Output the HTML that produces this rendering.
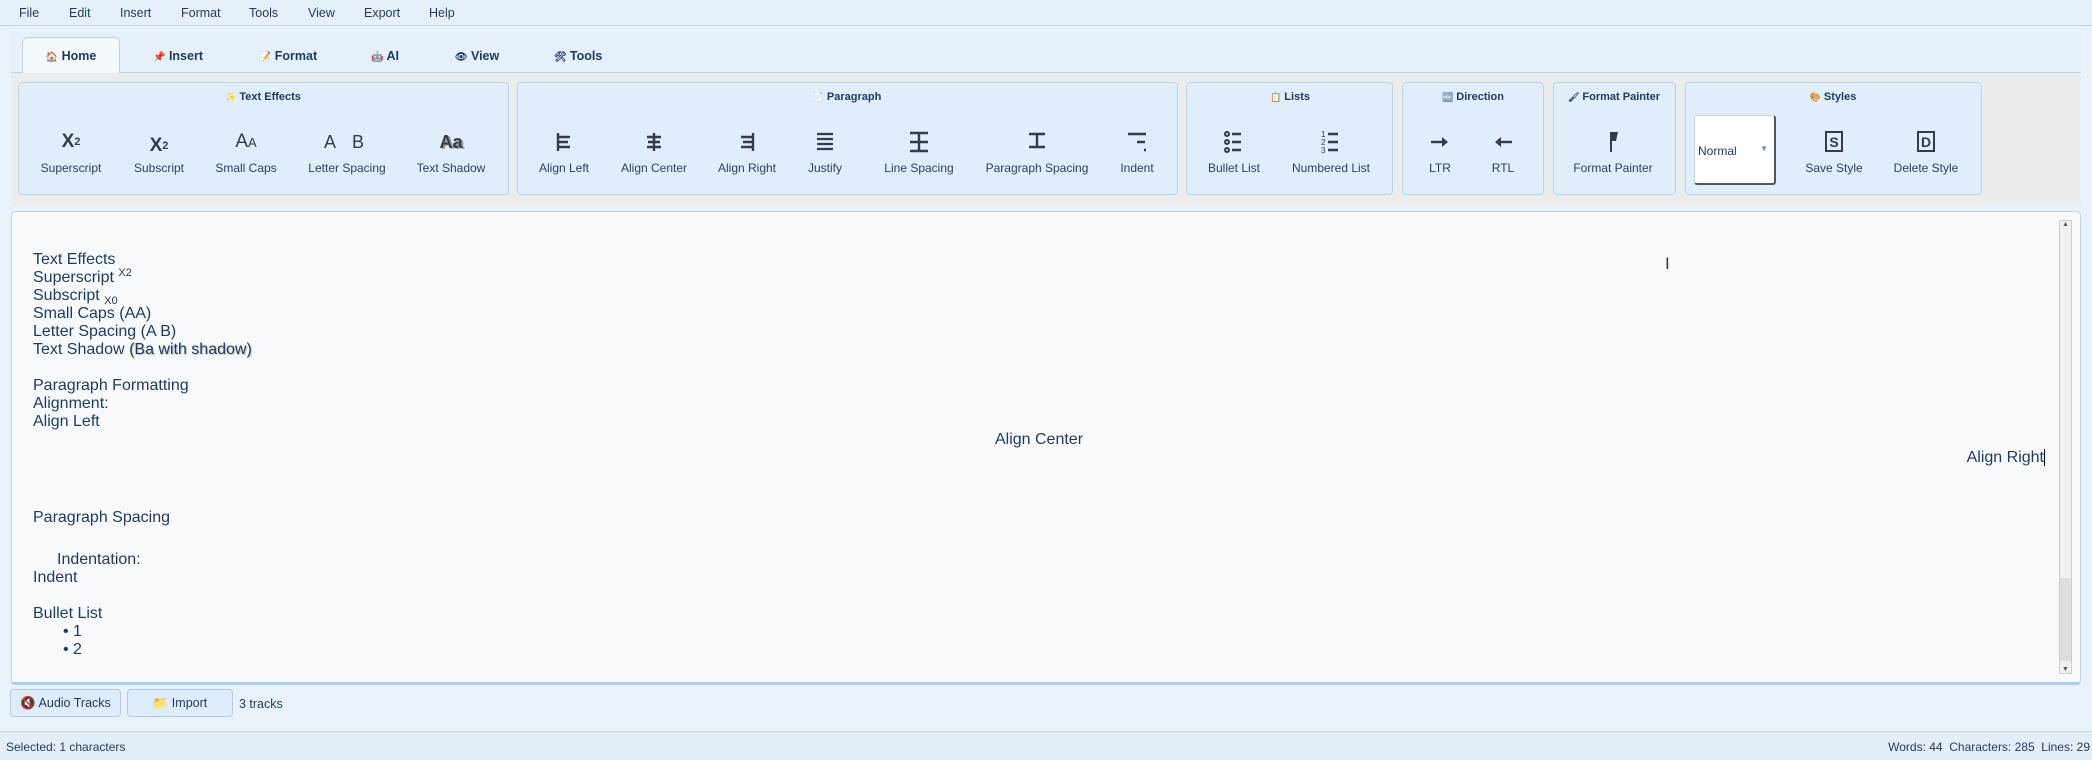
<!DOCTYPE html>
<html><head><meta charset="utf-8"><style>
*{margin:0;padding:0;box-sizing:border-box}
body{width:2092px;height:760px;overflow:hidden;background:#e9f2fb;font-family:"Liberation Sans","Noto Sans CJK SC",sans-serif;color:#1e3a5f;position:relative}
.a{position:absolute;white-space:nowrap}
.menu{top:0;left:0;width:2092px;height:26px;border-bottom:1px solid #bcd6ee;background:#e6f0fa}
.menu span{position:absolute;top:6px;font-size:12.5px;color:#1e3a5f}
.tabs{top:27px;left:11px;width:2070px;height:46px;background:#e5f0fb;border-bottom:1px solid #b9d4ee}
.tab{position:absolute;top:22px;font-size:12.5px;font-weight:bold;color:#1e3a5f;transform:translateX(-50%)}
.tab i{font-style:normal;font-size:10px}
.tb{top:73px;left:11px;width:2070px;height:133px;background:#ececec}
.g{position:absolute;top:82px;height:113px;background:#e0edfa;border:1px solid #b6d3ee;border-radius:4px}
.gt{position:absolute;top:91px;font-size:11px;font-weight:bold;color:#1e3a5f;transform:translateX(-50%)}
.gt i{font-style:normal;font-size:9px}
.lb{position:absolute;top:161px;font-size:12px;color:#2a4463;transform:translateX(-50%)}
.ic{position:absolute;top:129px;width:30px;height:26px;transform:translateX(-50%);display:flex;align-items:center;justify-content:center;color:#333c48}
.ed{top:211px;left:11px;width:2070px;height:474px;background:#f8f9fb;border:1px solid #b8d4ee;border-bottom:3px solid #a9cdef;border-radius:4px}
.t{position:absolute;font-size:16px;line-height:18px;color:#1e3a5f;white-space:nowrap}
.btn{position:absolute;top:689px;height:28px;background:#dfecf9;border:1px solid #aecbe8;border-radius:4px;font-size:12.5px;display:flex;align-items:center;justify-content:center;color:#1e3a5f}
.st{top:731px;left:0;width:2092px;height:29px;border-top:1px solid #b9d6ef;background:#e3eef9;font-size:12px}
.sm{font-size:11px;position:relative;line-height:0}
</style></head><body>
<div class="a menu">
<span style="left:19px">File</span><span style="left:69px">Edit</span><span style="left:120px">Insert</span><span style="left:181px">Format</span><span style="left:249px">Tools</span><span style="left:308px">View</span><span style="left:364px">Export</span><span style="left:429px">Help</span>
</div>
<div class="a tabs">
<div style="position:absolute;left:11px;top:10px;width:98px;height:37px;background:#f3f8fd;border:1px solid #b9d4ee;border-bottom:none;border-radius:6px 6px 0 0"></div>
<span class="tab" style="left:60px"><i>🏠</i> Home</span>
<span class="tab" style="left:167px"><i>📌</i> Insert</span>
<span class="tab" style="left:277px"><i>📝</i> Format</span>
<span class="tab" style="left:374px"><i>🤖</i> AI</span>
<span class="tab" style="left:466px"><i>👁</i> View</span>
<span class="tab" style="left:567px"><i>🛠</i> Tools</span>
</div>
<div class="a tb"></div>
<div class="g" style="left:18px;width:491px"></div>
<div class="g" style="left:517px;width:661px"></div>
<div class="g" style="left:1186px;width:207px"></div>
<div class="g" style="left:1402px;width:142px"></div>
<div class="g" style="left:1553px;width:123px"></div>
<div class="g" style="left:1685px;width:297px"></div>
<span class="gt" style="left:263px"><i>✨</i> Text Effects</span>
<span class="gt" style="left:847px"><i>📄</i> Paragraph</span>
<span class="gt" style="left:1290px"><i>📋</i> Lists</span>
<span class="gt" style="left:1473px"><i>🔤</i> Direction</span>
<span class="gt" style="left:1614px"><i>🖌</i> Format Painter</span>
<span class="gt" style="left:1833px"><i>🎨</i> Styles</span>

<div class="ic" style="left:71px;font-weight:bold;font-size:19px">X<sup style="font-size:11px">2</sup></div>
<div class="ic" style="left:159px;font-weight:bold;font-size:19px;top:133px">X<sub style="font-size:11px">2</sub></div>
<div class="ic" style="left:246px;font-size:19px">A<span style="font-size:13px">A</span></div>
<div class="ic" style="left:347px;font-size:18px;letter-spacing:6px;width:50px">A B</div>
<div class="ic" style="left:451px;font-size:18px;font-weight:bold;text-shadow:2px 1px 0 #999">Aa</div>

<svg class="ic" style="left:564px" viewBox="0 0 30 26"><g stroke="#333c48" stroke-width="2.4"><path d="M9 4v18M9 8h12M9 13h10M9 18h12"/></g></svg>
<svg class="ic" style="left:654px" viewBox="0 0 30 26"><g stroke="#333c48" stroke-width="2.4"><path d="M15 4v18M8 8h14M9 13h12M8 18h14"/></g></svg>
<svg class="ic" style="left:747px" viewBox="0 0 30 26"><g stroke="#333c48" stroke-width="2.4"><path d="M21 4v18M9 8h12M11 13h10M9 18h12"/></g></svg>
<svg class="ic" style="left:825px" viewBox="0 0 30 26"><g stroke="#333c48" stroke-width="2.2"><path d="M7 5h16M7 10h16M7 15h16M7 20h16"/></g></svg>
<svg class="ic" style="left:919px" viewBox="0 0 30 26"><g stroke="#333c48" stroke-width="2.4"><path d="M6 4h18M6 13h18M6 22h18M15 4v18"/></g></svg>
<svg class="ic" style="left:1037px" viewBox="0 0 30 26"><g stroke="#333c48" stroke-width="2.4"><path d="M7 5h16M7 18h16M15 5v13"/></g></svg>
<svg class="ic" style="left:1137px" viewBox="0 0 30 26"><g stroke="#333c48" stroke-width="2.4"><path d="M6 5h18M15 13h8M22 21h2"/></g></svg>
<svg class="ic" style="left:1234px" viewBox="0 0 30 26"><g stroke="#333c48" stroke-width="2" fill="none"><circle cx="8" cy="5" r="2"/><circle cx="8" cy="13" r="2"/><circle cx="8" cy="21" r="2"/><path d="M13 5h9M13 13h9M13 21h9" stroke-width="2.6"/></g></svg>
<svg class="ic" style="left:1331px" viewBox="0 0 30 26"><g fill="#333c48" font-size="8" font-family="Liberation Sans"><text x="5" y="8">1</text><text x="5" y="16">2</text><text x="5" y="24">3</text></g><g stroke="#333c48" stroke-width="2.6"><path d="M12 5h10M12 13h10M12 21h10"/></g></svg>
<svg class="ic" style="left:1440px" viewBox="0 0 30 26"><path d="M6 13h14" stroke="#333c48" stroke-width="2.4"/><path d="M17 8l6 5-6 5z" fill="#333c48"/></svg>
<svg class="ic" style="left:1503px" viewBox="0 0 30 26"><path d="M10 13h14" stroke="#333c48" stroke-width="2.4"/><path d="M13 8l-6 5 6 5z" fill="#333c48"/></svg>
<svg class="ic" style="left:1613px" viewBox="0 0 30 26"><path d="M13 3v20" stroke="#333c48" stroke-width="2"/><path d="M12 3h8l-2 9h-6z" fill="#333c48"/></svg>
<svg class="ic" style="left:1834px" viewBox="0 0 30 26"><rect x="7" y="3" width="16" height="19" fill="none" stroke="#333c48" stroke-width="2"/><text x="15" y="18" text-anchor="middle" font-size="14" font-weight="bold" font-family="Liberation Sans" fill="#333c48">S</text></svg>
<svg class="ic" style="left:1926px" viewBox="0 0 30 26"><rect x="7" y="3" width="16" height="19" fill="none" stroke="#333c48" stroke-width="2"/><text x="15" y="18" text-anchor="middle" font-size="14" font-weight="bold" font-family="Liberation Sans" fill="#333c48">D</text></svg>

<span class="lb" style="left:71px">Superscript</span>
<span class="lb" style="left:159px">Subscript</span>
<span class="lb" style="left:246px">Small Caps</span>
<span class="lb" style="left:347px">Letter Spacing</span>
<span class="lb" style="left:451px">Text Shadow</span>
<span class="lb" style="left:564px">Align Left</span>
<span class="lb" style="left:654px">Align Center</span>
<span class="lb" style="left:747px">Align Right</span>
<span class="lb" style="left:825px">Justify</span>
<span class="lb" style="left:919px">Line Spacing</span>
<span class="lb" style="left:1037px">Paragraph Spacing</span>
<span class="lb" style="left:1137px">Indent</span>
<span class="lb" style="left:1234px">Bullet List</span>
<span class="lb" style="left:1331px">Numbered List</span>
<span class="lb" style="left:1440px">LTR</span>
<span class="lb" style="left:1503px">RTL</span>
<span class="lb" style="left:1613px">Format Painter</span>
<span class="lb" style="left:1834px">Save Style</span>
<span class="lb" style="left:1926px">Delete Style</span>
<div style="position:absolute;left:1694px;top:115px;width:82px;height:70px;background:#fff;border:1px solid #c9d3dc;border-right:2px solid #555;border-bottom:2px solid #555;border-radius:3px;font-size:12px;color:#1e3a5f"><span style="position:absolute;left:3px;top:28px">Normal</span><span style="position:absolute;right:6px;top:28px;font-size:8px;color:#6a8cb0">▼</span></div>

<div class="a ed"></div>
<div class="t" style="left:33px;top:251px">Text Effects</div>
<div class="t" style="left:33px;top:269px">Superscript <span class="sm" style="top:-6px">X2</span></div>
<div class="t" style="left:33px;top:287px">Subscript <span class="sm" style="top:4px">X0</span></div>
<div class="t" style="left:33px;top:305px">Small Caps (AA)</div>
<div class="t" style="left:33px;top:323px">Letter Spacing (A B)</div>
<div class="t" style="left:33px;top:341px">Text Shadow <span style="text-shadow:1px 1px 1px #bbb">(Ba with shadow)</span></div>
<div class="t" style="left:33px;top:377px">Paragraph Formatting</div>
<div class="t" style="left:33px;top:395px">Alignment:</div>
<div class="t" style="left:33px;top:413px">Align Left</div>
<div class="t" style="left:1039px;top:431px;transform:translateX(-50%)">Align Center</div>
<div class="t" style="right:47px;top:449px">Align Right<span style="border-right:1px solid #000"></span></div>
<div class="t" style="left:33px;top:509px">Paragraph Spacing</div>
<div class="t" style="left:57px;top:551px">Indentation:</div>
<div class="t" style="left:33px;top:569px">Indent</div>
<div class="t" style="left:33px;top:605px">Bullet List</div>
<div class="t" style="left:63px;top:623px">• 1</div>
<div class="t" style="left:63px;top:641px">• 2</div>
<div style="position:absolute;left:1665px;top:254px;font-size:17px;color:#333">Ι</div>
<div style="position:absolute;left:2059px;top:220px;width:13px;height:454px;background:#f0f0f0;border:1px solid #ccc"><div style="position:absolute;left:0;right:0;top:357px;bottom:12px;background:#ddd"></div><span style="position:absolute;top:0;left:2px;font-size:7px;color:#555">▲</span><span style="position:absolute;bottom:0;left:2px;font-size:7px;color:#555">▼</span></div>

<div class="btn" style="left:10px;width:111px">🔇 Audio Tracks</div>
<div class="btn" style="left:127px;width:106px">📁 Import</div>
<div class="a" style="left:239px;top:697px;font-size:12.5px">3 tracks</div>
<div class="a st"><span style="position:absolute;left:6px;top:8px">Selected: 1 characters</span><span style="position:absolute;right:2px;top:8px">Words: 44&nbsp; Characters: 285&nbsp; Lines: 29</span></div>
</body></html>
